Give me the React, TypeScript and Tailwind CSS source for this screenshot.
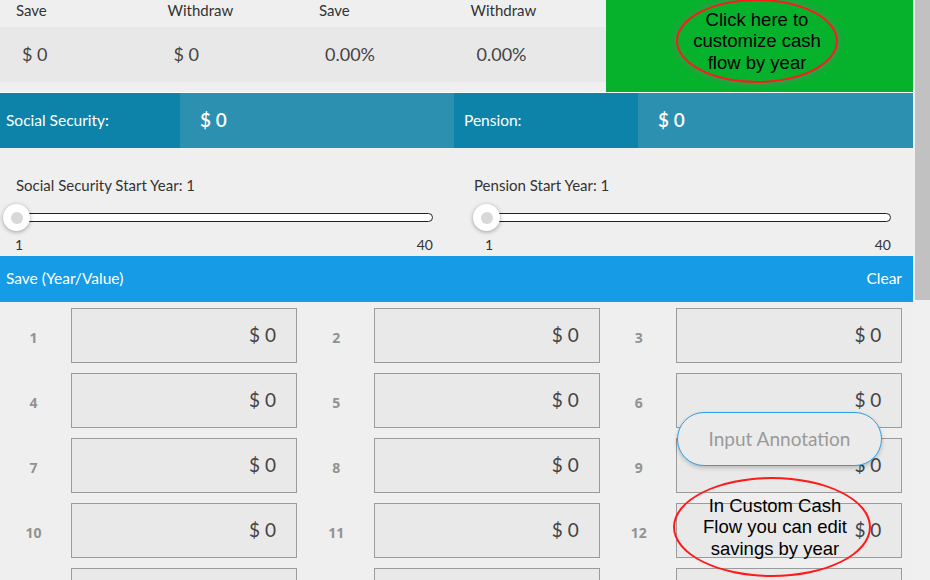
import React from 'react';

const ui = { fontFamily: 'Lato, "Noto Sans", sans-serif' };
const arial = { fontFamily: '"Liberation Sans", Arial, sans-serif' };
const sansBold = { fontFamily: '"Open Sans", "Noto Sans", sans-serif' };

interface SliderProps {
  label: string;
  labelPad: string;
  trackPad: string;
}

const Slider: React.FC<SliderProps> = ({ label, labelPad, trackPad }) => (
  <div className="flex-1 flex flex-col">
    <div className={`text-[15px] text-[#333] h-[20px] leading-[20px] mt-[27px] ${labelPad}`}>{label}</div>
    <div className={`relative h-[27px] mt-[9px] ${trackPad}`}>
      <div className="h-[27px] flex items-center">
        <div className="flex-1 h-[9px] bg-white border border-[#222] rounded-r-[5px]" />
      </div>
      <div className="absolute top-0 -ml-[13px] w-[27px] h-[27px] rounded-full bg-white shadow-[0_1px_4px_rgba(0,0,0,0.35)] flex items-center justify-center">
        <div className="w-[12px] h-[12px] rounded-full bg-[#d8d8d8]" />
      </div>
    </div>
    <div className={`flex justify-between text-[14px] text-[#333] mt-[3px] ${trackPad}`}>
      <span className="-ml-[1px]">1</span>
      <span>40</span>
    </div>
  </div>
);

const TopCol: React.FC<{ label: string; value: string }> = ({ label, value }) => (
  <div className="flex flex-col">
    <div className="h-[27px] pl-[16px] text-[15px] text-[#333] leading-[20px]">{label}</div>
    <div className="h-[55px] bg-[#e8e8e8] flex items-center text-[18px] text-[#444] pl-[22px]">{value}</div>
  </div>
);

const SaveCell: React.FC<{ year: number }> = ({ year }) => (
  <div className="flex items-center h-[55px]">
    <div className="w-[67px] text-center text-[14px] font-bold text-[#929292] pt-[3px]" style={sansBold}>
      {year}
    </div>
    <div className="ml-[4px] w-[226px] h-[55px] bg-[#e9e9e9] border border-[#9b9b9b] flex items-center justify-end pr-[20px] text-[19px] text-[#444]">
      $ 0
    </div>
  </div>
);

export default function App() {
  const years = Array.from({ length: 15 }, (_, i) => i + 1);

  return (
    <div className="w-[930px] h-[580px] overflow-hidden flex bg-[#efefef]" style={ui}>
      <div className="relative w-[913px] flex flex-col">
        {/* top totals */}
        <div className="flex h-[92px] shrink-0">
          <div className="w-[606px] grid grid-cols-4 content-start">
            <TopCol label="Save" value="$ 0" />
            <TopCol label="Withdraw" value="$ 0" />
            <TopCol label="Save" value="0.00%" />
            <TopCol label="Withdraw" value="0.00%" />
          </div>
          <div className="flex-1 bg-[#06b22c]" />
        </div>
        <div className="h-[1px] bg-white shrink-0" />

        {/* social security / pension */}
        <div className="flex h-[55px] shrink-0 text-white">
          <div className="w-[454px] flex">
            <div className="w-[180px] bg-[#0e83aa] flex items-center pl-[6px] text-[15.5px]">Social Security:</div>
            <div className="flex-1 bg-[#2c90b1] flex items-center pl-[20px] text-[19px] font-semibold">$ 0</div>
          </div>
          <div className="flex-1 flex">
            <div className="w-[184px] bg-[#0e83aa] flex items-center pl-[10px] text-[15.5px]">Pension:</div>
            <div className="flex-1 bg-[#2c90b1] flex items-center pl-[20px] text-[19px] font-semibold">$ 0</div>
          </div>
        </div>

        {/* sliders */}
        <div className="flex h-[108px] shrink-0">
          <div className="w-[454px] flex">
            <Slider label="Social Security Start Year: 1" labelPad="pl-[16px]" trackPad="pl-[16px] pr-[21px]" />
          </div>
          <div className="flex-1 flex">
            <Slider label="Pension Start Year: 1" labelPad="pl-[20px]" trackPad="pl-[32px] pr-[22px]" />
          </div>
        </div>

        {/* save header */}
        <div className="h-[46px] shrink-0 bg-[#169be6] flex items-center justify-between pl-[6px] pr-[11px] text-white text-[15.5px]">
          <span>Save (Year/Value)</span>
          <span>Clear</span>
        </div>

        {/* save grid */}
        <div className="grid grid-cols-3 gap-y-[10px] pt-[6px] pr-[5px] shrink-0">
          {years.map((y) => (
            <SaveCell key={y} year={y} />
          ))}
        </div>

        {/* annotations */}
        <div
          className="absolute left-[676px] top-[-1px] w-[162px] h-[84px] rounded-[50%] border-2 border-[#ff1a1a] shadow-[0_0_5px_2px_rgba(120,120,120,0.45)] flex items-center justify-center text-center text-[18.5px] leading-[21.5px] text-black"
          style={arial}
        >
          Click here to
          <br />
          customize cash
          <br />
          flow by year
        </div>

        <div className="absolute left-[677px] top-[412px] w-[205px] h-[54px] rounded-full border border-[#2d9fe3] bg-[#ebebeb] shadow-[0_2px_4px_rgba(0,0,0,0.2)] flex items-center justify-center text-[19px] text-[#9a9a9a]">
          Input Annotation
        </div>

        <div
          className="absolute left-[673px] top-[477px] w-[198px] h-[100px] rounded-[50%] border-2 border-[#ff1a1a] flex items-center justify-center text-center text-[18.5px] leading-[21.5px] text-black pl-[6px]"
          style={arial}
        >
          In Custom Cash
          <br />
          Flow you can edit
          <br />
          savings by year
        </div>
      </div>

      {/* scrollbar */}
      <div className="flex-1 bg-[#f0f0f0] pl-[2px]">
        <div className="h-[300px] bg-[#c1c1c1]" />
      </div>
    </div>
  );
}
